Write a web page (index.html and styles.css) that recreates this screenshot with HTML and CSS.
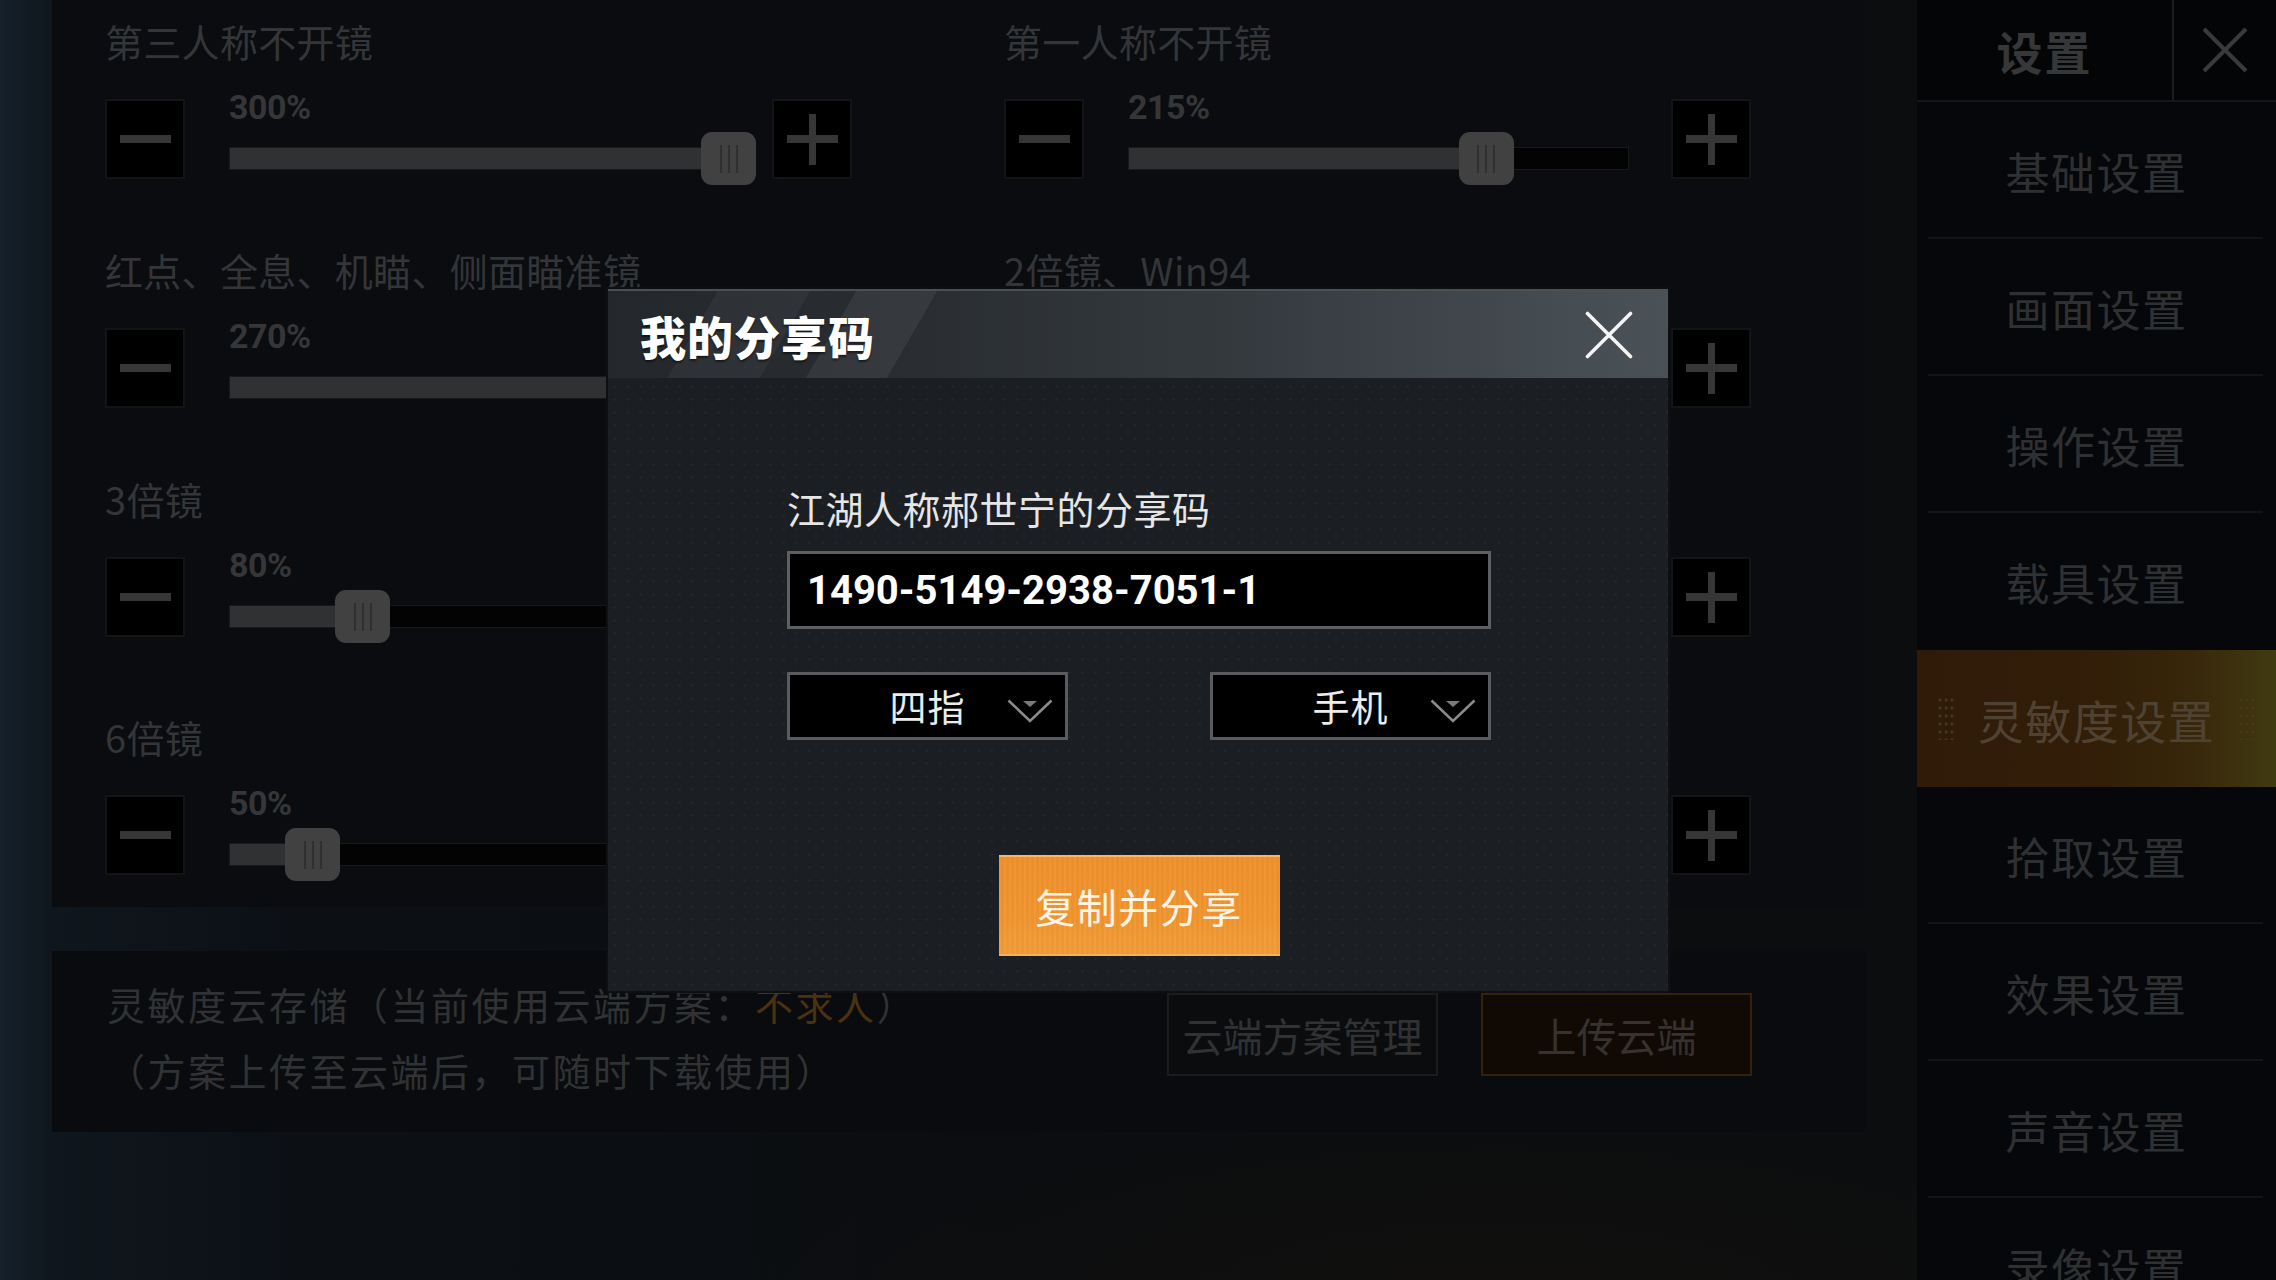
FILE: index.html
```html
<!DOCTYPE html>
<html lang="zh-CN">
<head>
<meta charset="utf-8">
<title>灵敏度设置 - 我的分享码</title>
<link rel="stylesheet" href="styles.css">
</head>
<body>
<div class="screen">
  <main class="content">
    <section class="panel sens">
      <div class="sens-grid">
        <div class="item">
          <div class="label">第三人称不开镜</div>
          <div class="controls">
            <span class="step minus"></span>
            <div class="slider">
              <div class="value">300%</div>
              <div class="track"><div class="fill" style="width:100%"></div><span class="thumb" style="left:100%"><i></i><i></i><i></i></span></div>
            </div>
            <span class="step plus"></span>
          </div>
        </div>
        <div class="item">
          <div class="label">第一人称不开镜</div>
          <div class="controls">
            <span class="step minus"></span>
            <div class="slider">
              <div class="value">215%</div>
              <div class="track"><div class="fill" style="width:71.7%"></div><span class="thumb" style="left:71.7%"><i></i><i></i><i></i></span></div>
            </div>
            <span class="step plus"></span>
          </div>
        </div>
        <div class="item">
          <div class="label">红点、全息、机瞄、侧面瞄准镜</div>
          <div class="controls">
            <span class="step minus"></span>
            <div class="slider">
              <div class="value">270%</div>
              <div class="track"><div class="fill" style="width:90%"></div><span class="thumb" style="left:90%"><i></i><i></i><i></i></span></div>
            </div>
            <span class="step plus"></span>
          </div>
        </div>
        <div class="item">
          <div class="label">2倍镜、Win94</div>
          <div class="controls">
            <span class="step minus"></span>
            <div class="slider">
              <div class="value covered">130%</div>
              <div class="track"><div class="fill" style="width:43.3%"></div><span class="thumb" style="left:43.3%"><i></i><i></i><i></i></span></div>
            </div>
            <span class="step plus"></span>
          </div>
        </div>
        <div class="item">
          <div class="label">3倍镜</div>
          <div class="controls">
            <span class="step minus"></span>
            <div class="slider">
              <div class="value">80%</div>
              <div class="track"><div class="fill" style="width:26.7%"></div><span class="thumb" style="left:26.7%"><i></i><i></i><i></i></span></div>
            </div>
            <span class="step plus"></span>
          </div>
        </div>
        <div class="item">
          <div class="label covered">4倍镜、VSS</div>
          <div class="controls">
            <span class="step minus"></span>
            <div class="slider">
              <div class="value covered">60%</div>
              <div class="track"><div class="fill" style="width:20%"></div><span class="thumb" style="left:20%"><i></i><i></i><i></i></span></div>
            </div>
            <span class="step plus"></span>
          </div>
        </div>
        <div class="item last">
          <div class="label">6倍镜</div>
          <div class="controls">
            <span class="step minus"></span>
            <div class="slider">
              <div class="value">50%</div>
              <div class="track"><div class="fill" style="width:16.7%"></div><span class="thumb" style="left:16.7%"><i></i><i></i><i></i></span></div>
            </div>
            <span class="step plus"></span>
          </div>
        </div>
        <div class="item last">
          <div class="label covered">8倍镜</div>
          <div class="controls">
            <span class="step minus"></span>
            <div class="slider">
              <div class="value covered">10%</div>
              <div class="track"><div class="fill" style="width:3.3%"></div><span class="thumb" style="left:3.3%"><i></i><i></i><i></i></span></div>
            </div>
            <span class="step plus"></span>
          </div>
        </div>
      </div>
    </section>

    <section class="panel cloud">
      <div class="cloud-text">
        <p>灵敏度云存储（当前使用云端方案：<span class="plan">不求人</span>）</p>
        <p>（方案上传至云端后，可随时下载使用）</p>
      </div>
      <div class="cloud-actions">
        <span class="cloud-btn">云端方案管理</span>
        <span class="cloud-btn upload">上传云端</span>
      </div>
    </section>
  </main>

  <aside class="sidebar">
    <div class="side-head">
      <div class="side-title">设置</div>
      <div class="side-close">
        <svg width="48" height="48" viewBox="0 0 48 48"><path d="M3 3 L45 45 M45 3 L3 45" stroke="#393a3b" stroke-width="4" fill="none"/></svg>
      </div>
    </div>
    <nav class="menu">
      <div class="menu-item">基础设置</div>
      <div class="menu-item">画面设置</div>
      <div class="menu-item">操作设置</div>
      <div class="menu-item">载具设置</div>
      <div class="menu-item active"><span class="dots left"></span>灵敏度设置<span class="dots right"></span></div>
      <div class="menu-item">拾取设置</div>
      <div class="menu-item">效果设置</div>
      <div class="menu-item">声音设置</div>
      <div class="menu-item">录像设置</div>
    </nav>
  </aside>

  <div class="modal">
    <div class="modal-head">
      <h1 class="modal-title">我的分享码</h1>
      <span class="modal-close">
        <svg width="48" height="48" viewBox="0 0 48 48"><path d="M2.5 2.5 L45.5 45.5 M45.5 2.5 L2.5 45.5" stroke="#f4f4f4" stroke-width="3.6" stroke-linecap="round" fill="none"/></svg>
      </span>
    </div>
    <div class="modal-body">
      <div class="share-label">江湖人称郝世宁的分享码</div>
      <div class="code-box">1490-5149-2938-7051-1</div>
      <div class="selects">
        <div class="select"><span class="select-text">四指</span>
          <svg class="chev" width="46" height="24" viewBox="0 0 46 24"><path d="M1.5 1.5 L23 22 L44.5 1.5" stroke="#8a8a8a" stroke-width="2.6" fill="none"/><path d="M16 2 L30 2 L23 8 Z" fill="#7a7a7a"/></svg>
        </div>
        <div class="select"><span class="select-text">手机</span>
          <svg class="chev" width="46" height="24" viewBox="0 0 46 24"><path d="M1.5 1.5 L23 22 L44.5 1.5" stroke="#8a8a8a" stroke-width="2.6" fill="none"/><path d="M16 2 L30 2 L23 8 Z" fill="#7a7a7a"/></svg>
        </div>
      </div>
      <div class="share-btn">复制并分享</div>
    </div>
  </div>
</div>
</body>
</html>
```
FILE: styles.css
```css
* { box-sizing: border-box; }

html, body {
  margin: 0;
  padding: 0;
  background: #0b0d10;
}

body {
  font-family: "Noto Sans CJK SC", "Noto Sans", sans-serif;
}

.screen {
  position: relative;
  width: 2276px;
  height: 1280px;
  overflow: hidden;
  display: flex;
  background:
    radial-gradient(ellipse 800px 240px at 1500px 1320px, rgba(40, 26, 12, 0.22), rgba(40, 26, 12, 0) 100%),
    linear-gradient(90deg, #14202a 0, #0f161d 52px, #0c1015 300px, #0b0d10 1000px, #0c0d0f 100%);
}

/* ---------- main content ---------- */
.content {
  width: 1917px;
  flex: none;
  padding: 0 52px;
}

.panel {
  background: #0a0c10;
}

.sens {
  height: 907px;
  padding: 19px 0 0 53px;
}

.sens-grid {
  display: grid;
  grid-template-columns: 747px 747px;
  column-gap: 152px;
  row-gap: 69px;
}

.item.last {
  margin-top: 9px;
}

.label {
  font-size: 38px;
  line-height: 44px;
  height: 44px;
  color: #333538;
  white-space: nowrap;
  letter-spacing: 0.3px;
}

.covered {
  visibility: hidden;
}

.controls {
  display: flex;
  align-items: flex-start;
  margin-top: 36px;
  height: 80px;
}

.step {
  position: relative;
  flex: none;
  width: 80px;
  height: 80px;
  background: #000;
  border: 2px solid #131416;
}

.step::before,
.step::after {
  content: "";
  position: absolute;
  left: 50%;
  top: 50%;
  background: #363637;
}

.step::before {
  width: 51px;
  height: 8px;
  margin: -4px 0 0 -25.5px;
}

.step.minus::after { display: none; }

.step.plus::after {
  width: 7px;
  height: 51px;
  margin: -25.5px 0 0 -3.5px;
}

.slider {
  flex: 1;
  margin: 0 42px 0 44px;
  position: relative;
}

.value {
  font-family: "Roboto", "Noto Sans", sans-serif;
  font-weight: 700;
  font-size: 34px;
  line-height: 36px;
  height: 36px;
  margin-top: -10px;
  color: #353638;
  letter-spacing: -0.5px;
}

.track {
  position: relative;
  margin-top: 22px;
  height: 23px;
  background: #030303;
  border: 1px solid #18191b;
}

.fill {
  height: 100%;
  background: #303132;
}

.thumb {
  position: absolute;
  top: -16px;
  width: 55px;
  height: 53px;
  margin-left: -28px;
  background: #414142;
  border-radius: 11px;
  display: flex;
  justify-content: center;
  align-items: center;
  gap: 6px;
}

.thumb i {
  display: block;
  width: 2px;
  height: 28px;
  background: #303031;
}

/* ---------- cloud panel ---------- */
.cloud {
  margin-top: 44px;
  height: 181px;
  padding: 20px 113px 0 55px;
  display: flex;
  justify-content: space-between;
  align-items: flex-start;
  background: #0a0b0e;
}

.cloud-text p {
  margin: 0;
  font-size: 38px;
  line-height: 66px;
  color: #303234;
  letter-spacing: 2.5px;
  white-space: nowrap;
}

.cloud-text .plan {
  color: #4a3210;
}

.cloud-actions {
  display: flex;
  gap: 43px;
  margin-top: 22px;
}

.cloud-btn {
  width: 271px;
  height: 83px;
  display: flex;
  align-items: center;
  justify-content: center;
  font-size: 40px;
  color: #303234;
  border: 2px solid #1b1c1e;
  background: #0b0c0e;
}

.cloud-btn.upload {
  border-color: #332207;
  background: #110a04;
  color: #35322f;
}

/* ---------- sidebar ---------- */
.sidebar {
  flex: none;
  width: 359px;
  height: 1280px;
  background: #06070a;
}

.side-head {
  display: flex;
  height: 102px;
  border-bottom: 2px solid #151618;
}

.side-title {
  flex: 1;
  display: flex;
  align-items: center;
  justify-content: center;
  font-size: 46px;
  font-weight: 700;
  color: #363739;
  background: #040506;
  letter-spacing: 2px;
}

.side-close {
  width: 104px;
  display: flex;
  align-items: center;
  justify-content: center;
  border-left: 2px solid #1b1c1e;
  background: #040506;
}

.menu-item {
  position: relative;
  height: 137px;
  display: flex;
  align-items: center;
  justify-content: center;
  font-size: 44px;
  color: #2f3032;
  letter-spacing: 1.5px;
}

.menu-item::after {
  content: "";
  position: absolute;
  left: 11px;
  right: 13px;
  bottom: 0;
  height: 2px;
  background: #131417;
}

.menu-item:nth-child(4)::after,
.menu-item.active::after,
.menu-item:last-child::after {
  display: none;
}

.menu-item.active {
  background: linear-gradient(90deg, #2f1b08 0%, #321d08 45%, #37260a 75%, #403a10 100%);
  color: #4f4233;
  font-size: 46px;
}

.dots {
  position: absolute;
  top: 46px;
  width: 18px;
  height: 44px;
  background-image: radial-gradient(circle, #4a381d 1.2px, transparent 1.8px);
  background-size: 6px 8px;
}

.dots.left { left: 20px; }
.dots.right { right: 20px; }

/* ---------- modal ---------- */
.modal {
  position: absolute;
  left: 608px;
  top: 289px;
  width: 1060px;
  height: 702px;
  background-color: #1b1e22;
  background-image: radial-gradient(circle, rgba(255, 255, 255, 0.035) 1px, transparent 1.6px);
  background-size: 13px 13px;
  box-shadow: 0 0 0 2px #0d0f12;
}

.modal-head {
  height: 89px;
  display: flex;
  align-items: center;
  justify-content: space-between;
  padding: 0 35px 0 32px;
  border-top: 2px solid #4b5055;
  background:
    linear-gradient(120deg,
      rgba(255,255,255,0) 0,
      rgba(255,255,255,0) 95px,
      rgba(255,255,255,0.04) 95px,
      rgba(255,255,255,0.04) 175px,
      rgba(255,255,255,0) 175px,
      rgba(255,255,255,0) 215px,
      rgba(255,255,255,0.06) 215px,
      rgba(255,255,255,0.06) 285px,
      rgba(255,255,255,0) 285px),
    linear-gradient(90deg, #24282c 0%, #2a2e32 30%, #353a3f 60%, #4a5258 100%);
}

.modal-title {
  margin: 0;
  font-size: 46px;
  font-weight: 900;
  color: #ffffff;
  letter-spacing: 1px;
  text-shadow: 0 2px 2px rgba(0, 0, 0, 0.5);
}

.modal-close {
  display: flex;
  width: 48px;
  height: 48px;
}

.modal-body {
  padding: 108px 177px 0 179px;
}

.share-label {
  font-size: 38px;
  line-height: 44px;
  color: #e6e6e6;
  letter-spacing: 0.5px;
}

.code-box {
  margin-top: 21px;
  height: 78px;
  background: #000;
  border: 3px solid #5e5f62;
  padding-left: 17px;
  display: flex;
  align-items: center;
  font-family: "Roboto", "Noto Sans", sans-serif;
  font-weight: 700;
  font-size: 40px;
  color: #ffffff;
}

.selects {
  margin-top: 43px;
  display: flex;
  justify-content: space-between;
}

.select {
  position: relative;
  width: 281px;
  height: 68px;
  background: #000;
  border: 3px solid #5a5b5e;
  display: flex;
  align-items: center;
  justify-content: center;
}

.select-text {
  font-size: 37px;
  color: #ececec;
  letter-spacing: 1px;
}

.chev {
  position: absolute;
  right: 12px;
  top: 24px;
}

.share-btn {
  margin: 115px auto 0;
  width: 281px;
  height: 101px;
  display: flex;
  align-items: center;
  justify-content: center;
  font-size: 40px;
  color: #fff4e6;
  letter-spacing: 1.5px;
  background:
    repeating-linear-gradient(90deg, rgba(255,255,255,0.03) 0 2px, rgba(0,0,0,0.02) 2px 5px),
    linear-gradient(180deg, #f0902c 0%, #f1952f 60%, #f29c38 100%);
  border-top: 2px solid #f7b56a;
  border-bottom: 2px solid #f5b05c;
}
```
